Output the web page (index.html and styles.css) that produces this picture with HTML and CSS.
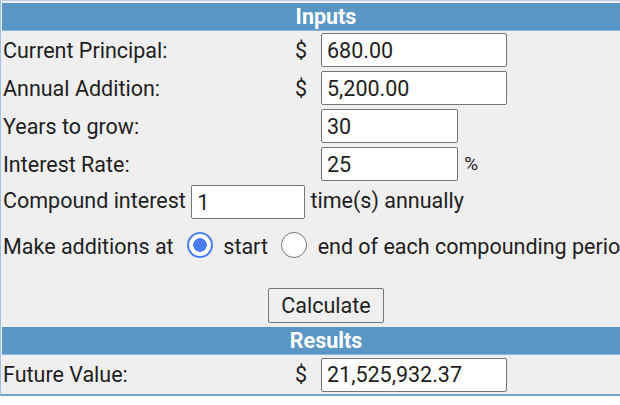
FILE: index.html
```html
<!DOCTYPE html>
<html>
<head>
    <link rel="stylesheet" href="styles.css">
</head>
<body>
    <table class="calc">
        <colgroup>
            <col class="col-label">
            <col class="col-cur">
            <col>
        </colgroup>
        <tr><th colspan="3" class="band">Inputs</th></tr>
        <tr>
            <td>Current Principal:</td>
            <td class="cur">$</td>
            <td><input class="field" value="680.00"></td>
        </tr>
        <tr>
            <td>Annual Addition:</td>
            <td class="cur">$</td>
            <td><input class="field" value="5,200.00"></td>
        </tr>
        <tr>
            <td>Years to grow:</td>
            <td></td>
            <td><input class="field short" value="30"></td>
        </tr>
        <tr>
            <td>Interest Rate:</td>
            <td></td>
            <td><input class="field short" value="25"> <span class="pct">%</span></td>
        </tr>
        <tr>
            <td colspan="3">Compound interest <input class="field times" value="1"> time(s) annually</td>
        </tr>
        <tr class="additions">
            <td colspan="3">
                Make additions at
                <input type="radio" name="when" class="radio" checked> start
                <input type="radio" name="when" class="radio"> end of each compounding period
            </td>
        </tr>
        <tr class="action">
            <td colspan="3"><button class="calc-btn">Calculate</button></td>
        </tr>
        <tr><th colspan="3" class="band">Results</th></tr>
        <tr class="last">
            <td>Future Value:</td>
            <td class="cur">$</td>
            <td><input class="field" value="21,525,932.37"></td>
        </tr>
    </table>
</body>
</html>
```

FILE: styles.css
```css
html, body {
    margin: 0;
    overflow: hidden;
    background: #fff;
}
body {
    font-family: Roboto, "Noto Sans", sans-serif;
    font-size: 21.5px;
    color: #1e1e1e;
}
.calc {
    width: 650px;
    table-layout: fixed;
    border-collapse: separate;
    border-spacing: 0;
    background: #efefef;
    border-top: 1px solid #b5d0e8;
    border-left: 1px solid #9fc2e2;
    border-bottom: 2px solid #6ea3d1;
    padding: 2px 0 0 1px;
}
.col-label { width: 290px; }
.col-cur { width: 28px; }
.calc td {
    height: 38px;
    padding: 0 0 0 1px;
    white-space: nowrap;
    vertical-align: middle;
}
.calc .cur { padding-left: 3px; }
.band {
    height: 27px;
    padding: 0;
    background: #5a96c5;
    color: #fff;
    font-weight: bold;
    font-size: 21.5px;
    text-align: center;
    border-bottom: 1px solid #8db8de;
    line-height: 27px;
}
.field {
    box-sizing: border-box;
    width: 186px;
    height: 34px;
    margin: 0;
    padding: 0 5px;
    font-family: Roboto, "Noto Sans", sans-serif;
    font-size: 21.5px;
    color: #1e1e1e;
    background: #fff;
    border: 1px solid #767676;
    border-radius: 2px;
    vertical-align: middle;
}
.field.short { width: 137px; }
.field.times { width: 114px; }
.pct { margin-left: 1px; font-size: 19px; }
.additions td { height: 48px; }
.radio {
    appearance: none;
    -webkit-appearance: none;
    box-sizing: border-box;
    width: 26px;
    height: 26px;
    margin: 0 5px 0 8px;
    border: 1.5px solid #777;
    border-radius: 50%;
    background: #fff;
    vertical-align: -4px;
}
.radio:checked {
    border: 2.5px solid #4a7ef0;
    background: radial-gradient(circle, #4a7ef0 0 6.5px, #fff 7px);
}
.action td {
    height: 54px;
    text-align: center;
    vertical-align: bottom;
    padding: 0 0 4px 0;
}
.calc-btn {
    box-sizing: border-box;
    width: 116px;
    height: 35px;
    font-family: Roboto, "Noto Sans", sans-serif;
    font-size: 21.5px;
    color: #1e1e1e;
    background: #efefef;
    border: 1px solid #767676;
    border-radius: 2px;
    padding: 0;
}
.last td { height: 39px; }
```
